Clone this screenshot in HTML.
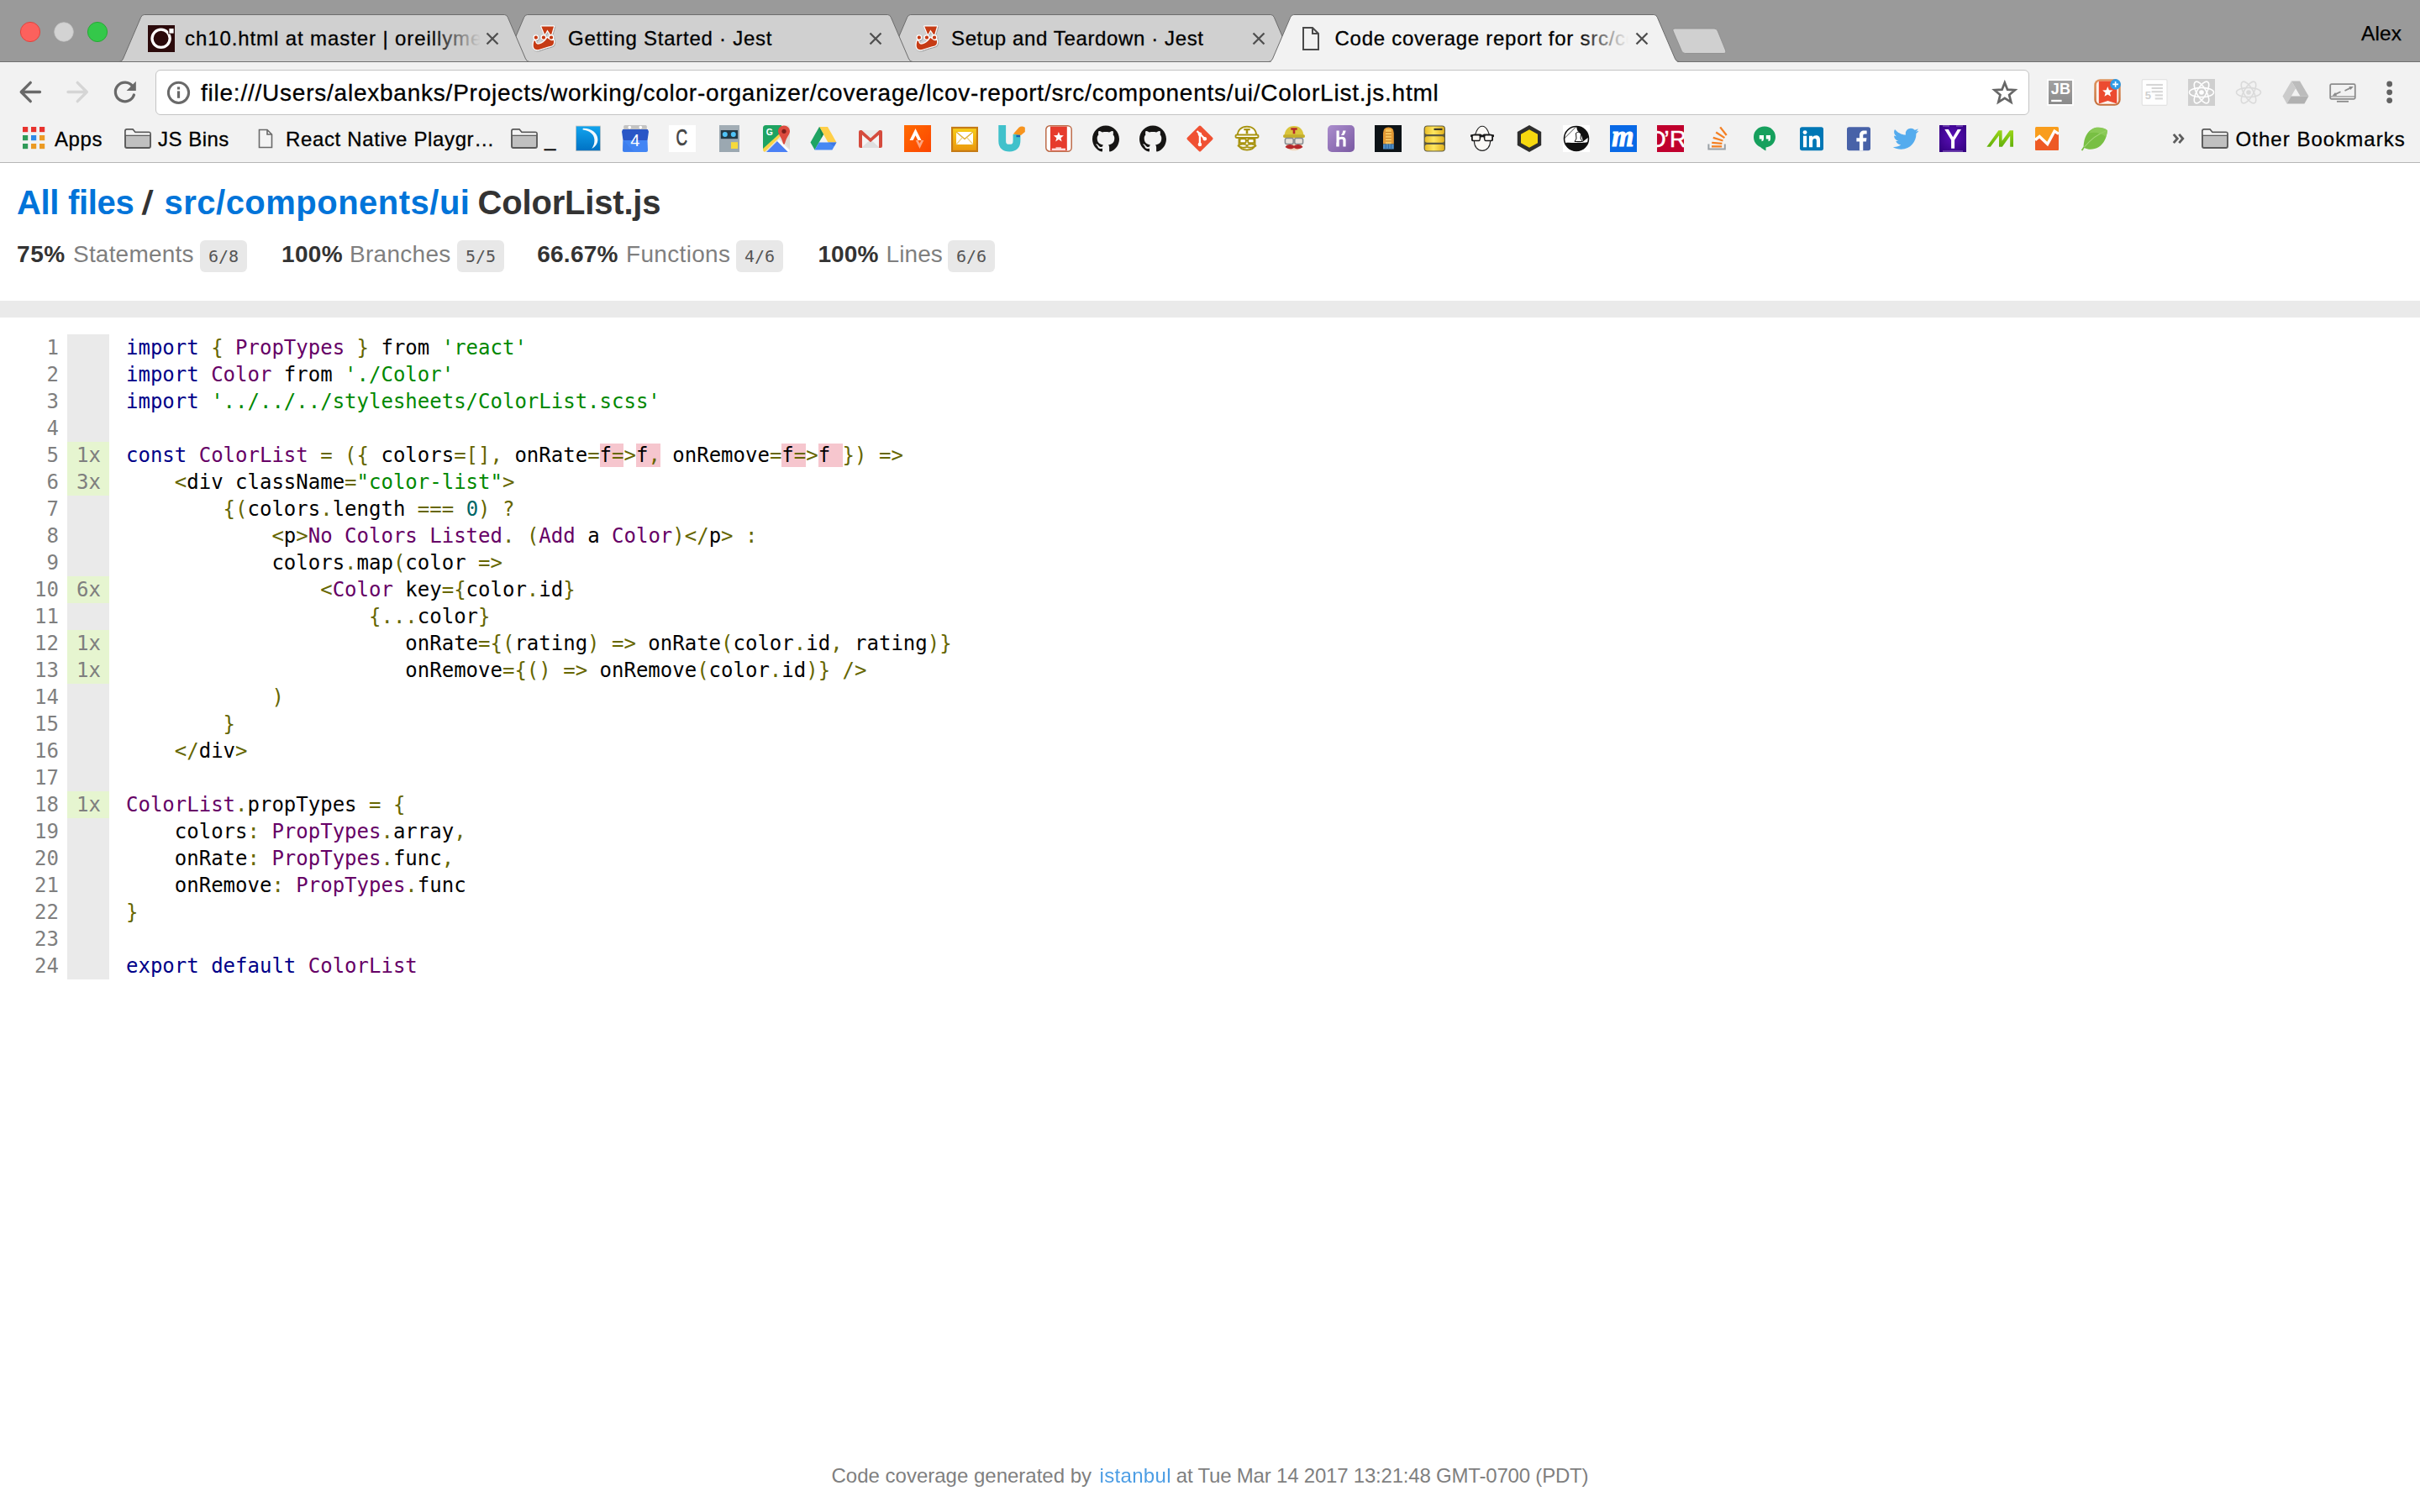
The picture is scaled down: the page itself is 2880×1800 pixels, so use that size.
<!DOCTYPE html>
<html lang="en">
<head>
<meta charset="utf-8">
<title>Code coverage report for src/components/ui/ColorList.js</title>
<style>
*,*:before,*:after{box-sizing:border-box}
html,body{margin:0;padding:0;width:2880px;height:1800px;overflow:hidden;background:#fff}
body{position:relative;font-family:"Liberation Sans",Arial,sans-serif;color:#333}
.abs{position:absolute}
/* ---------- browser chrome ---------- */
#tabstrip{position:absolute;left:0;top:0;width:2880px;height:74px;background:#9a9a9a}
#tabsvg{position:absolute;left:0;top:0}
.tl{position:absolute;top:26px;width:24px;height:24px;border-radius:50%}
.tabtitle{position:absolute;top:30px;-webkit-text-stroke:0.3px #000;height:32px;line-height:32px;font-size:24px;color:#000;white-space:nowrap;overflow:hidden}
.tabtitle .fade{position:absolute;right:0;top:0;width:60px;height:32px}
#user{position:absolute;left:2810px;top:24.5px;-webkit-text-stroke:0.25px #000;font-size:24.5px;line-height:30px;color:#000;letter-spacing:0.1px}
#toolbar{position:absolute;left:0;top:74px;width:2880px;height:119px;background:#f2f2f2}
#tbborder{position:absolute;left:0;top:193px;width:2880px;height:1px;background:#b6b6b6}
#omni{position:absolute;left:185px;top:83px;width:2230px;height:54px;background:#fff;border:1px solid #c4c4c4;border-radius:6px}
#url{position:absolute;left:239px;top:91px;-webkit-text-stroke:0.3px #000;font-size:28px;line-height:40px;color:#000;white-space:nowrap;letter-spacing:0.77px}
.bm{position:absolute;top:149px;-webkit-text-stroke:0.3px #000;height:34px;line-height:34px;font-size:24px;color:#000;white-space:nowrap}
.ico{position:absolute}
/* ---------- page ---------- */
#page{position:absolute;left:0;top:194px;width:2880px;height:1606px;background:#fff;overflow:hidden}
#page a{color:#0074D9;text-decoration:none}
h1{position:absolute;left:0;top:23.5px;margin:0;font-size:40px;line-height:46px;font-weight:bold;color:#333;white-space:nowrap}
h1 .w{position:absolute;top:0}
.stat{position:absolute;left:0;top:91.5px;font-size:28px;line-height:34px;white-space:nowrap;color:#333}
.stat b,.stat span{position:absolute;top:0}
.stat b{font-weight:bold}
.quiet{color:#7f7f7f}
.stat span.fraction{font-family:"DejaVu Sans Mono","Liberation Mono",monospace;font-size:20px;line-height:22px;color:#555;background:#E8E8E8;padding:8px 10px;border-radius:6px;top:0.5px;width:56px;height:38px;letter-spacing:0}
#statusline{position:absolute;left:0;top:164px;width:2880px;height:20px;background:#eaeaea}
#code{position:absolute;left:0;top:204px;font-family:"DejaVu Sans Mono","Liberation Mono",monospace;font-size:24px;line-height:32px;white-space:pre}
#code .ln{position:absolute;left:0;top:0;width:70px;text-align:right;color:#7f7f7f}
#code .cov{position:absolute;left:80px;top:0;width:50px;text-align:right;color:#7f7f7f}
#code .cov span{display:block;height:32px;padding:0 10px;background:#eaeaea}
#code .cov span.y{background:rgb(230,245,208)}
#code .src{position:absolute;left:150px;top:0;color:#000}
.kwd{color:#008}.pun{color:#660}.typ{color:#606}.str{color:#080}.lit{color:#066}.tag{color:#008}.atn{color:#606}.atv{color:#080}
.no{background:#F6C6CE}
#footer{position:absolute;left:0;top:1548.3px;width:2880px;font-size:24px;line-height:30px;color:#7f7f7f;white-space:nowrap}
#footer span,#footer a{position:absolute;top:0}
#footer a{opacity:.7}
</style>
</head>
<body>
<div id="tabstrip"></div>
<div id="toolbar"></div>
<div id="omni"></div>
<svg id="tabsvg" width="2880" height="194" viewBox="0 0 2880 194">
<defs>
<linearGradient id="gblue" x1="0" y1="0" x2="0" y2="1"><stop offset="0" stop-color="#11a4ee"/><stop offset="1" stop-color="#0072c4"/></linearGradient>
<linearGradient id="ggold" x1="0" y1="0" x2="0" y2="1"><stop offset="0" stop-color="#f8cf1a"/><stop offset="1" stop-color="#ea960c"/></linearGradient>
<linearGradient id="gher" x1="0" y1="0" x2="1" y2="1"><stop offset="0" stop-color="#ab8ecd"/><stop offset="1" stop-color="#7a59a2"/></linearGradient>
<linearGradient id="gstrava" x1="0" y1="0" x2="1" y2="1"><stop offset="0" stop-color="#ff6a00"/><stop offset="1" stop-color="#fc4502"/></linearGradient>
<radialGradient id="gyahoo" cx="0.5" cy="0.45" r="0.7"><stop offset="0" stop-color="#5a10b8"/><stop offset="1" stop-color="#33007f"/></radialGradient>
<linearGradient id="gmgreen" x1="0" y1="0" x2="0" y2="1"><stop offset="0" stop-color="#9bd61a"/><stop offset="1" stop-color="#62b00a"/></linearGradient>
<linearGradient id="gdb" x1="0" y1="0" x2="1" y2="0"><stop offset="0" stop-color="#e8be2a"/><stop offset="0.45" stop-color="#ffe760"/><stop offset="1" stop-color="#e2b21e"/></linearGradient>
<linearGradient id="ggdl" x1="0" y1="0" x2="1" y2="1"><stop offset="0" stop-color="#c2c2c2"/><stop offset="1" stop-color="#a6a6a6"/></linearGradient>
<filter id="fsh" x="-20%" y="-20%" width="150%" height="150%"><feDropShadow dx="0.5" dy="0.7" stdDeviation="0.5" flood-color="#000" flood-opacity="0.4"/></filter>
<linearGradient id="gjb" x1="0" y1="0" x2="0" y2="1"><stop offset="0" stop-color="#a3a3a3"/><stop offset="1" stop-color="#898989"/></linearGradient>
<linearGradient id="gwl" x1="0" y1="0" x2="0" y2="1"><stop offset="0" stop-color="#de935c"/><stop offset="1" stop-color="#c46f3c"/></linearGradient>
</defs>
<path d="M1054,73.5 Q1057,73.5 1058.5,70 L1079.7,20.5 Q1081,17.5 1083.7,17.5 H1512.3 Q1515,17.5 1516.3,20.5 L1537.5,70 Q1539,73.5 1542,73.5 Z" fill="#d0d0d0"/>
<path d="M1054,73.5 Q1057,73.5 1058.5,70 L1079.7,20.5 Q1081,17.5 1083.7,17.5 H1512.3 Q1515,17.5 1516.3,20.5 L1537.5,70 Q1539,73.5 1542,73.5" fill="none" stroke="#6c6c6c" stroke-width="1"/>
<path d="M598,73.5 Q601,73.5 602.5,70 L623.7,20.5 Q625,17.5 627.7,17.5 H1056.3 Q1059,17.5 1060.3,20.5 L1081.5,70 Q1083,73.5 1086,73.5 Z" fill="#d0d0d0"/>
<path d="M598,73.5 Q601,73.5 602.5,70 L623.7,20.5 Q625,17.5 627.7,17.5 H1056.3 Q1059,17.5 1060.3,20.5 L1081.5,70 Q1083,73.5 1086,73.5" fill="none" stroke="#6c6c6c" stroke-width="1"/>
<path d="M142,73.5 Q145,73.5 146.5,70 L167.7,20.5 Q169,17.5 171.7,17.5 H600.3 Q603,17.5 604.3,20.5 L625.5,70 Q627,73.5 630,73.5 Z" fill="#d0d0d0"/>
<path d="M142,73.5 Q145,73.5 146.5,70 L167.7,20.5 Q169,17.5 171.7,17.5 H600.3 Q603,17.5 604.3,20.5 L625.5,70 Q627,73.5 630,73.5" fill="none" stroke="#6c6c6c" stroke-width="1"/>
<path d="M1993.5,34 H2040 Q2043,34 2044.2,37 L2053.5,60 Q2054.5,63.5 2051,63.5 H2005.5 Q2002.5,63.5 2001.3,60.5 L1991.2,37 Q1990,34 1993.5,34 Z" fill="#d0d0d0" stroke="#8a8a8a" stroke-width="0.8"/>
<rect x="0" y="73" width="2880" height="1" fill="#6f6f6f"/>
<path d="M1510,73.5 Q1513,73.5 1514.5,70 L1535.7,20.5 Q1537,17.5 1539.7,17.5 H1968.3 Q1971,17.5 1972.3,20.5 L1993.5,70 Q1995,73.5 1998,73.5 Z" fill="#f2f2f2"/>
<rect x="1513" y="73" width="483" height="2" fill="#f2f2f2"/>
<path d="M1510,73.5 Q1513,73.5 1514.5,70 L1535.7,20.5 Q1537,17.5 1539.7,17.5 H1968.3 Q1971,17.5 1972.3,20.5 L1993.5,70 Q1995,73.5 1998,73.5" fill="none" stroke="#6c6c6c" stroke-width="1"/>
<path d="M579.5,39.5 L592.5,52.5 M592.5,39.5 L579.5,52.5" stroke="#4f4f4f" stroke-width="2.3" fill="none"/>
<path d="M1035.5,39.5 L1048.5,52.5 M1048.5,39.5 L1035.5,52.5" stroke="#4f4f4f" stroke-width="2.3" fill="none"/>
<path d="M1491.5,39.5 L1504.5,52.5 M1504.5,39.5 L1491.5,52.5" stroke="#4f4f4f" stroke-width="2.3" fill="none"/>
<path d="M1947.5,39.5 L1960.5,52.5 M1960.5,39.5 L1947.5,52.5" stroke="#4f4f4f" stroke-width="2.3" fill="none"/>
<circle cx="36" cy="38" r="11.6" fill="#fc615d" stroke="#e0443e" stroke-width="1"/>
<circle cx="76" cy="38" r="11.300" fill="#d3d3d3" stroke="#c4c4c4" stroke-width="0.800"/>
<circle cx="116" cy="38" r="11.6" fill="#34c84a" stroke="#27aa35" stroke-width="1"/>
<path d="M1551,33 H1562 L1569,40 V59 H1551 Z M1562,33 V40 H1569" fill="none" stroke="#4a4a4a" stroke-width="2" stroke-linejoin="miter"/>
<path d="M47.500,109.500 H26 M36.300,98.300 L25.200,109.500 L36.300,120.700" fill="none" stroke="#696969" stroke-width="3.300" stroke-linecap="round" stroke-linejoin="round"/>
<path d="M81,109.500 H102.500 M92.200,98.300 L103.300,109.500 L92.200,120.700" fill="none" stroke="#d5d5d5" stroke-width="3.300" stroke-linecap="round" stroke-linejoin="round"/>
<path d="M157.800,102.800 A11.300,11.300 0 1 0 159.400,113" fill="none" stroke="#696969" stroke-width="3.300" stroke-linecap="round"/>
<path d="M161.800,96.800 V108 H150.600 Z" fill="#696969"/>
<circle cx="212.500" cy="110.300" r="12.100" fill="none" stroke="#696969" stroke-width="3"/>
<rect x="210.900" y="108.400" width="3.200" height="8.400" fill="#696969"/><rect x="210.900" y="103.400" width="3.200" height="3.100" fill="#696969"/>
<path d="M2385.80,98.40 L2389.09,106.67 L2397.97,107.24 L2391.13,112.93 L2393.32,121.56 L2385.80,116.80 L2378.28,121.56 L2380.47,112.93 L2373.63,107.24 L2382.51,106.67 Z" fill="none" stroke="#666" stroke-width="2.700" stroke-linejoin="miter"/>
<circle cx="2843.700" cy="100" r="3.400" fill="#626262"/>
<circle cx="2843.700" cy="109.8" r="3.400" fill="#626262"/>
<circle cx="2843.700" cy="119.6" r="3.400" fill="#626262"/>
<rect x="27" y="151" width="6.2" height="6.2" fill="#e8332e"/>
<rect x="37" y="151" width="6.2" height="6.2" fill="#e8332e"/>
<rect x="47" y="151" width="6.2" height="6.2" fill="#e8332e"/>
<rect x="27" y="161" width="6.2" height="6.2" fill="#2f9a58"/>
<rect x="37" y="161" width="6.2" height="6.2" fill="#2f8ae8"/>
<rect x="47" y="161" width="6.2" height="6.2" fill="#eb9a23"/>
<rect x="27" y="171" width="6.2" height="6.2" fill="#2f9a58"/>
<rect x="37" y="171" width="6.2" height="6.2" fill="#eb9a23"/>
<rect x="47" y="171" width="6.2" height="6.2" fill="#eb9a23"/>
<path d="M149,156 Q149,154 151,154 H158 L161,157.5 H177 Q179,157.5 179,159.5 V174 Q179,176 177,176 H151 Q149,176 149,174 Z" fill="#c0c0c0" stroke="#5a5a5a" stroke-width="1.900"/><path d="M149,161.3 H179" stroke="#5e5e5e" stroke-width="1.4"/><path d="M149.8,156.2 Q149.8,154.8 151.2,154.8 H157.6 L160.6,158.3 H178.2 V160.6 H149.8 Z" fill="#f4f4f4"/>
<path d="M609,156 Q609,154 611,154 H618 L621,157.5 H637 Q639,157.5 639,159.5 V174 Q639,176 637,176 H611 Q609,176 609,174 Z" fill="#c0c0c0" stroke="#5a5a5a" stroke-width="1.900"/><path d="M609,161.3 H639" stroke="#5e5e5e" stroke-width="1.4"/><path d="M609.8,156.2 Q609.8,154.8 611.2,154.8 H617.6 L620.6,158.3 H638.2 V160.6 H609.8 Z" fill="#f4f4f4"/>
<path d="M2621,156 Q2621,154 2623,154 H2630 L2633,157.5 H2649 Q2651,157.5 2651,159.5 V174 Q2651,176 2649,176 H2623 Q2621,176 2621,174 Z" fill="#c0c0c0" stroke="#5a5a5a" stroke-width="1.900"/><path d="M2621,161.3 H2651" stroke="#5e5e5e" stroke-width="1.4"/><path d="M2621.8,156.2 Q2621.8,154.8 2623.2,154.8 H2629.6 L2632.6,158.3 H2650.2 V160.6 H2621.8 Z" fill="#f4f4f4"/>
<path d="M308.5,154.5 H318 L323.5,160 V175.5 H308.5 Z M318,154.5 V160 H323.5" fill="#f4f4f4" stroke="#6a6a6a" stroke-width="1.6"/>
<path d="M2586.800,159.800 L2591.300,165 L2586.800,170.200 M2593.300,159.800 L2597.800,165 L2593.300,170.200" fill="none" stroke="#5e5e5e" stroke-width="2.800"/>
</svg>
<svg class="ico" style="left:176px;top:30px" width="32" height="32" viewBox="0 0 32 32"><rect width="32" height="32" fill="#2b0a0b"/><circle cx="15.6" cy="15.8" r="10.6" fill="none" stroke="#fff" stroke-width="3.3"/><rect x="24.3" y="2.9" width="7.4" height="7.6" fill="#2b0a0b"/><rect x="25.4" y="4" width="5.2" height="5.6" fill="#fff"/></svg>
<svg class="ico" style="left:632px;top:30px" width="32" height="32" viewBox="0 0 32 32"><g filter="url(#fsh)"><g stroke="#fff" stroke-width="2.4" stroke-linejoin="round" fill="#fff"><path d="M12.3,1.4 H27 L24.2,11 L22.9,10.7 L19.4,5.6 L16.7,10.4 L15.9,10.2 Z"/><path d="M3.6,18.4 C2.4,22 2.4,25.5 3.5,27.3 C5,29.7 8.5,29.5 11,28.5 C15,26.9 19.5,25.6 23.5,24.7 C26.5,24 27.7,21.5 26.7,17.7 C25.4,18.7 23.4,18.4 22.2,17.3 L19.2,15 C17.5,18.6 12,23 8,22.8 C6.4,22.6 5.3,21 5,18.8 C4.5,18.9 4,18.8 3.6,18.4 Z"/><circle cx="5.85" cy="14.65" r="2.2"/><circle cx="14.95" cy="14.65" r="2.2"/><circle cx="24" cy="14.65" r="2.2"/></g></g><path d="M12.3,1.4 H27 L24.2,11 L22.9,10.7 L19.4,5.6 L16.7,10.4 L15.9,10.2 Z" fill="#c63b14"/><path d="M3.6,18.4 C2.4,22 2.4,25.5 3.5,27.3 C5,29.7 8.5,29.5 11,28.5 C15,26.9 19.5,25.6 23.5,24.7 C26.5,24 27.7,21.5 26.7,17.7 C25.4,18.7 23.4,18.4 22.2,17.3 L19.2,15 C17.5,18.6 12,23 8,22.8 C6.4,22.6 5.3,21 5,18.8 C4.5,18.9 4,18.8 3.6,18.4 Z" fill="#c63b14"/><circle cx="5.85" cy="14.65" r="2.15" fill="#c63b14"/><circle cx="14.95" cy="14.65" r="2.15" fill="#c63b14"/><circle cx="24" cy="14.65" r="2.15" fill="#c63b14"/></svg>
<svg class="ico" style="left:1088px;top:30px" width="32" height="32" viewBox="0 0 32 32"><g filter="url(#fsh)"><g stroke="#fff" stroke-width="2.4" stroke-linejoin="round" fill="#fff"><path d="M12.3,1.4 H27 L24.2,11 L22.9,10.7 L19.4,5.6 L16.7,10.4 L15.9,10.2 Z"/><path d="M3.6,18.4 C2.4,22 2.4,25.5 3.5,27.3 C5,29.7 8.5,29.5 11,28.5 C15,26.9 19.5,25.6 23.5,24.7 C26.5,24 27.7,21.5 26.7,17.7 C25.4,18.7 23.4,18.4 22.2,17.3 L19.2,15 C17.5,18.6 12,23 8,22.8 C6.4,22.6 5.3,21 5,18.8 C4.5,18.9 4,18.8 3.6,18.4 Z"/><circle cx="5.85" cy="14.65" r="2.2"/><circle cx="14.95" cy="14.65" r="2.2"/><circle cx="24" cy="14.65" r="2.2"/></g></g><path d="M12.3,1.4 H27 L24.2,11 L22.9,10.7 L19.4,5.6 L16.7,10.4 L15.9,10.2 Z" fill="#c63b14"/><path d="M3.6,18.4 C2.4,22 2.4,25.5 3.5,27.3 C5,29.7 8.5,29.5 11,28.5 C15,26.9 19.5,25.6 23.5,24.7 C26.5,24 27.7,21.5 26.7,17.7 C25.4,18.7 23.4,18.4 22.2,17.3 L19.2,15 C17.5,18.6 12,23 8,22.8 C6.4,22.6 5.3,21 5,18.8 C4.5,18.9 4,18.8 3.6,18.4 Z" fill="#c63b14"/><circle cx="5.85" cy="14.65" r="2.15" fill="#c63b14"/><circle cx="14.95" cy="14.65" r="2.15" fill="#c63b14"/><circle cx="24" cy="14.65" r="2.15" fill="#c63b14"/></svg>
<div class="tabtitle" style="left:220px;width:352px;letter-spacing:0.9px">ch10.html at master | oreillymedia/learning-react<span class="fade" style="background:linear-gradient(to right, rgba(208,208,208,0), #d0d0d0)"></span></div>
<div class="tabtitle" style="left:676px;width:352px;letter-spacing:0.75px">Getting Started · Jest</div>
<div class="tabtitle" style="left:1132px;width:352px;letter-spacing:0.62px">Setup and Teardown · Jest</div>
<div class="tabtitle" style="left:1588.500px;width:349px;letter-spacing:0.740px">Code coverage report for src/components/ui/ColorList.js<span class="fade" style="background:linear-gradient(to right, rgba(242,242,242,0), #f2f2f2)"></span></div>
<div id="user">Alex</div>
<div id="url">file:///Users/alexbanks/Projects/working/color-organizer/coverage/lcov-report/src/components/ui/ColorList.js.html</div>
<svg class="ico" style="left:2436px;top:94px" width="32" height="32" viewBox="0 0 32 32"><rect x="1" y="1" width="30" height="30" fill="url(#gjb)" stroke="#fdfdfd" stroke-width="2"/><text x="4.800" y="17.700" font-family="Liberation Sans, Arial, sans-serif" font-size="18" font-weight="bold" fill="#fff" letter-spacing="0.300">JB</text><rect x="5.200" y="24.800" width="12.400" height="2.300" fill="#fff"/></svg>
<svg class="ico" style="left:2492px;top:94px" width="32" height="32" viewBox="0 0 32 32"><rect x="0.300" y="0.300" width="31.400" height="31.400" rx="7" fill="url(#gwl)"/><rect x="2.800" y="2.400" width="26.400" height="27.400" rx="4.500" fill="#fdf3ee"/><path d="M5.800,2.400 H27.300 V29.500 L16.500,25.900 L5.800,29.500 Z" fill="#ec4b30"/><path d="M16.30,9.10 L17.95,13.33 L22.48,13.59 L18.96,16.47 L20.12,20.86 L16.30,18.40 L12.48,20.86 L13.64,16.47 L10.12,13.59 L14.65,13.33 Z" fill="#fff"/><circle cx="25.600" cy="6.400" r="6.300" fill="#2f9be6"/><path d="M22.200,6.400 H29 M25.600,3 V9.800" stroke="#fff" stroke-width="1.600"/></svg>
<svg class="ico" style="left:2548px;top:94px" width="32" height="32" viewBox="0 0 32 32"><rect x="1.200" y="0.600" width="29.800" height="30.800" rx="1.500" fill="#fefefe" stroke="#e2e2e2" stroke-width="1.200"/><g stroke="#d6d6d6" stroke-width="2.100"><path d="M6.200,7 H25.900"/><path d="M12.600,11 H25.900"/><path d="M12.600,15.200 H25.900"/><path d="M16.700,19.400 H25.900"/><path d="M16.700,23.400 H25.900"/></g><text x="4.800" y="23.800" font-family="Liberation Sans, Arial, sans-serif" font-size="13" font-weight="bold" fill="#d0d0d0">5</text></svg>
<svg class="ico" style="left:2604px;top:94px" width="32" height="32" viewBox="0 0 32 32"><rect width="32" height="32" fill="#cfcfcf"/><g fill="none" stroke="#fff" stroke-width="1.6"><ellipse cx="16" cy="16" rx="14.5" ry="5.6"/><ellipse cx="16" cy="16" rx="14.5" ry="5.6" transform="rotate(60 16 16)"/><ellipse cx="16" cy="16" rx="14.5" ry="5.6" transform="rotate(120 16 16)"/></g><circle cx="16" cy="16" r="2.8" fill="#fff"/></svg>
<svg class="ico" style="left:2660px;top:94px" width="32" height="32" viewBox="0 0 32 32"><g fill="none" stroke="#dadada" stroke-width="1.6"><ellipse cx="16" cy="16" rx="14.5" ry="5.6"/><ellipse cx="16" cy="16" rx="14.5" ry="5.6" transform="rotate(60 16 16)"/><ellipse cx="16" cy="16" rx="14.5" ry="5.6" transform="rotate(120 16 16)"/></g><circle cx="16" cy="16" r="2.8" fill="#dadada"/></svg>
<svg class="ico" style="left:2716px;top:94px" width="32" height="32" viewBox="0 0 32 32"><path d="M11,2.5 H21 L31.5,20.5 H21.5 Z" fill="#bcbcbc"/><path d="M11,2.5 L0.5,20.5 L5.6,29.5 L16.1,11.3 Z" fill="#cbcbcb"/><path d="M10.7,20.5 H31.5 L26.4,29.5 H5.6 Z" fill="#b1b1b1"/></svg>
<svg class="ico" style="left:2772px;top:94px" width="32" height="32" viewBox="0 0 32 32"><rect x="1.2" y="6.2" width="29.6" height="17.6" rx="1.5" fill="none" stroke="#8c8c8c" stroke-width="1.8"/><path d="M1.5,21 H30.5" stroke="#8c8c8c" stroke-width="1.2"/><path d="M9,26.8 H23" stroke="#8c8c8c" stroke-width="1.8"/><path d="M18.5,14 L26,10.4" stroke="#8c8c8c" stroke-width="1.8"/><path d="M28.8,9 L23.4,9 L25.3,13 Z" fill="#8c8c8c"/><path d="M13.5,15.2 L6.5,18.6" stroke="#8c8c8c" stroke-width="1.8"/><path d="M3.6,20 L9,20 L7.1,16 Z" fill="#8c8c8c"/></svg>
<div class="bm" style="left:65px;letter-spacing:0.6px">Apps</div>
<div class="bm" style="left:188px;letter-spacing:0.49px">JS Bins</div>
<div class="bm" style="left:340px;letter-spacing:0.64px">React Native Playgr…</div>
<div class="bm" style="left:648px">_</div>
<div class="bm" style="left:2660.5px;letter-spacing:1.04px">Other Bookmarks</div>
<svg class="ico" style="left:684px;top:149px" width="32" height="32" viewBox="0 0 32 32"><rect x="1" y="0.6" width="30" height="30.4" fill="#cfc9c4"/><rect x="1.8" y="1.4" width="28.4" height="28.8" fill="url(#gblue)"/><path d="M9.6,3.9 C19,3.3 27.4,9 27.4,17 C27.4,22 24.6,25.6 20.3,27.9 C22.6,24.6 23.7,21 23.4,17 C22.9,10.6 17.3,6.300 9.600,5.500 Z" fill="#fff" opacity="0.95"/></svg>
<svg class="ico" style="left:740px;top:149px" width="32" height="32" viewBox="0 0 32 32"><rect x="2.2" y="0" width="27.6" height="7" rx="1.5" fill="#c3c3c3"/><circle cx="9.3" cy="2.6" r="1.8" fill="#fff"/><circle cx="22.3" cy="2.6" r="1.8" fill="#fff"/><path d="M1.2,5 H30.8 L32,7.5 L30.5,18 H1.5 L0,7.500 Z" fill="#2a56c6"/><path d="M1.500,18 H30.500 L31,30 Q31,32 29,32 H3 Q1,32 1,30 Z" fill="#4285f4"/><path d="M1.500,18 L14,31 H3 Q1,31.500 1,30 Z" fill="#3b78e7" opacity="0.55"/><text x="15.800" y="25" font-family="Liberation Sans, Arial, sans-serif" font-size="20" fill="#fff" text-anchor="middle">4</text></svg>
<svg class="ico" style="left:796px;top:149px" width="32" height="32" viewBox="0 0 32 32"><rect width="32" height="32" fill="#fff"/><text transform="translate(15.400 23.500) scale(0.700 1)" font-family="Liberation Sans, Arial, sans-serif" font-size="27" fill="#444" text-anchor="middle" stroke="#444" stroke-width="0.700">C</text></svg>
<svg class="ico" style="left:852px;top:149px" width="32" height="32" viewBox="0 0 32 32"><rect x="4" y="0" width="24" height="32" fill="#9ba8b1"/><rect x="4" y="0" width="24" height="5.600" fill="#a2adb5"/><rect x="5.800" y="6" width="20.200" height="10.200" fill="#243a46"/><circle cx="10.800" cy="11" r="3" fill="#4fc3f7"/><circle cx="20.800" cy="11" r="3" fill="#4fc3f7"/><rect x="18" y="20.200" width="8" height="7.800" fill="#f6da3c"/></svg>
<svg class="ico" style="left:908px;top:149px" width="32" height="32" viewBox="0 0 32 32"><clipPath id="cpm"><rect width="32" height="32" rx="3.5"/></clipPath><g clip-path="url(#cpm)"><rect width="32" height="32" fill="#e6e3df"/><path d="M0,0 H22 L22,10 L0,29 Z" fill="#1ea362"/><path d="M0,28 L21,9 L23,11 L2,32 H0 Z" fill="#fbd445"/><path d="M4,32 L17,19 L30,32 Z" fill="#4a80f5"/><path d="M19,17 L32,30 V32 H30 L17,19 Z" fill="#fff" opacity="0.9"/><path d="M21,14 L32,3 V28 Z" fill="#dedbd6"/></g><path d="M25,0.5 C29,0.5 32,3.5 32,7.3 C32,11 28,14 26,22 C25.8,23 24.2,23 24,22 C22,14 18,11 18,7.3 C18,3.5 21,0.5 25,0.5 Z" fill="#dc4b3e"/><circle cx="25" cy="7.3" r="2.6" fill="#7b1f1a"/><text x="3.8" y="11.7" font-family="Liberation Sans, Arial, sans-serif" font-size="10.4" font-weight="bold" fill="#fff">G</text></svg>
<svg class="ico" style="left:964px;top:149px" width="32" height="32" viewBox="0 0 32 32"><path d="M11,2 H21 L31.5,20.5 H21.5 Z" fill="#ffcf48"/><path d="M11,2 L0.5,20.5 L5.6,29.5 L16.1,11 Z" fill="#1fa463"/><path d="M10.7,20.5 H31.5 L26.4,29.5 H5.6 Z" fill="#4688f4"/><path d="M11,2 L16.1,11 L13.4,15.8 Z" fill="#14804a" opacity="0.8"/><path d="M21.5,20.5 H31.5 L29,25 Z" fill="#3367d6" opacity="0.5"/></svg>
<svg class="ico" style="left:1020px;top:149px" width="32" height="32" viewBox="0 0 32 32"><rect x="2" y="6" width="28" height="21" rx="2" fill="#e9e9e9"/><path d="M4,8 L16,19 L28,8 V27 H4 Z" fill="#f4f4f4"/><path d="M5,27 L16,17 L27,27 Z" fill="#dedede"/><path d="M2,8 Q2,6 4,6 H5.5 L16,15.5 L26.5,6 H28 Q30,6 30,8 V25 Q30,27 28,27 H26 V11.5 L16,20.3 L6,11.5 V27 H4 Q2,27 2,25 Z" fill="#d54b3d"/></svg>
<svg class="ico" style="left:1076px;top:149px" width="32" height="32" viewBox="0 0 32 32"><rect width="32" height="32" fill="url(#gstrava)"/><path d="M13.5,4 L20.5,18 H16.4 L13.5,12.3 L10.6,18 H6.5 Z" fill="#fff"/><path d="M18.5,28 L23.3,18 H20.4 L18.5,21.8 L16.6,18 H13.7 Z" fill="#fda580"/></svg>
<svg class="ico" style="left:1132px;top:149px" width="32" height="32" viewBox="0 0 32 32"><rect x="1" y="3" width="30" height="28" fill="url(#ggold)" stroke="#c57b14" stroke-width="2.2"/><rect x="6" y="8" width="20" height="15" fill="#fff"/><path d="M6,8 L16,16.5 L26,8" fill="none" stroke="#e0b13a" stroke-width="1.6"/><path d="M6,23 L13,15 M26,23 L19,15" fill="none" stroke="#edd48a" stroke-width="1.2"/></svg>
<svg class="ico" style="left:1188px;top:149px" width="32" height="32" viewBox="0 0 32 32"><path d="M4.7,0 V19 Q4.7,27.200 13.400,27.200 Q22,27.200 22,18.500 V11" fill="none" stroke="#40c1cb" stroke-width="8.800" stroke-linecap="butt"/><path d="M17.800,10.600 L24.600,2.800 Q28,0.400 31.800,2.800 L31.800,8 L27,12 Z" fill="#f7941e"/><rect x="21.400" y="11.800" width="4.600" height="2.400" fill="#1b62b3"/></svg>
<svg class="ico" style="left:1244px;top:149px" width="32" height="32" viewBox="0 0 32 32"><rect x="0.800" y="0.800" width="30.400" height="30.400" rx="4.500" fill="#fff" stroke="#bd6c4a" stroke-width="1.500"/><rect x="6" y="1.600" width="19.800" height="28.800" fill="#e63b2c"/><path d="M15.90,8.00 L17.49,12.12 L21.89,12.35 L18.47,15.13 L19.60,19.40 L15.90,17.00 L12.20,19.40 L13.33,15.13 L9.91,12.35 L14.31,12.12 Z" fill="#fff"/><path d="M7.700,28.700 H24" fill="none" stroke="#fff" stroke-width="1.900"/><path d="M12.500,27 H19" fill="none" stroke="#fff" stroke-width="1.400" opacity="0.85"/></svg>
<svg class="ico" style="left:1300px;top:149px" width="32" height="32" viewBox="0 0 32 32"><path d="M16,0.4 C7.2,0.4 0,7.6 0,16.4 C0,23.5 4.6,29.5 10.9,31.6 C11.7,31.7 12,31.2 12,30.8 C12,30.4 12,29.2 12,27.8 C7.5,28.8 6.6,25.9 6.6,25.9 C5.9,24 4.8,23.5 4.8,23.5 C3.4,22.5 4.9,22.5 4.9,22.5 C6.5,22.6 7.4,24.2 7.4,24.2 C8.8,26.6 11.1,25.9 12,25.5 C12.1,24.5 12.6,23.8 13,23.4 C9.5,23 5.7,21.6 5.7,15.5 C5.7,13.7 6.3,12.3 7.4,11.2 C7.2,10.8 6.7,9.2 7.5,7 C7.5,7 8.9,6.5 11.900,8.600 C13.200,8.200 14.600,8.100 16,8.100 C17.400,8.100 18.800,8.200 20.100,8.600 C23.100,6.500 24.500,7 24.500,7 C25.300,9.200 24.800,10.800 24.600,11.200 C25.700,12.300 26.300,13.700 26.300,15.500 C26.300,21.600 22.500,23 19,23.400 C19.600,23.900 20.100,24.900 20.100,26.400 C20.100,28.600 20.100,30.300 20.100,30.800 C20.100,31.200 20.400,31.700 21.200,31.600 C27.500,29.500 32,23.500 32,16.400 C32,7.600 24.800,0.400 16,0.400 Z" fill="#161514"/></svg>
<svg class="ico" style="left:1356px;top:149px" width="32" height="32" viewBox="0 0 32 32"><path d="M16,0.4 C7.2,0.4 0,7.6 0,16.4 C0,23.5 4.6,29.5 10.9,31.6 C11.7,31.7 12,31.2 12,30.8 C12,30.4 12,29.2 12,27.8 C7.5,28.8 6.6,25.9 6.6,25.9 C5.9,24 4.8,23.5 4.8,23.5 C3.4,22.5 4.9,22.5 4.9,22.5 C6.5,22.6 7.4,24.2 7.4,24.2 C8.8,26.6 11.1,25.9 12,25.5 C12.1,24.5 12.6,23.8 13,23.4 C9.5,23 5.7,21.6 5.7,15.5 C5.7,13.7 6.3,12.3 7.4,11.2 C7.2,10.8 6.7,9.2 7.5,7 C7.5,7 8.9,6.5 11.900,8.600 C13.200,8.200 14.600,8.100 16,8.100 C17.400,8.100 18.800,8.200 20.100,8.600 C23.100,6.500 24.500,7 24.500,7 C25.300,9.200 24.800,10.800 24.600,11.200 C25.700,12.300 26.300,13.700 26.300,15.500 C26.300,21.600 22.500,23 19,23.400 C19.600,23.900 20.100,24.900 20.100,26.400 C20.100,28.600 20.100,30.300 20.100,30.800 C20.100,31.200 20.400,31.700 21.200,31.600 C27.500,29.500 32,23.500 32,16.400 C32,7.600 24.800,0.400 16,0.400 Z" fill="#161514"/></svg>
<svg class="ico" style="left:1412px;top:149px" width="32" height="32" viewBox="0 0 32 32"><rect x="4.600" y="4.600" width="22.800" height="22.800" rx="1.600" transform="rotate(45 16 16)" fill="#f05133"/><path d="M12.500,7 L21.800,16.200 M15.900,10.500 V23" stroke="#fff" stroke-width="2.300" fill="none"/><circle cx="15.900" cy="10.800" r="2.300" fill="#fff"/><circle cx="15.900" cy="23" r="2.300" fill="#fff"/><circle cx="21.800" cy="16.200" r="2.300" fill="#fff"/></svg>
<svg class="ico" style="left:1468px;top:149px" width="32" height="32" viewBox="0 0 32 32"><g fill="#fff" stroke="#a89310" stroke-width="1.900" stroke-linejoin="round"><path d="M6.500,15 V23.500 C7.500,27.500 11,29.500 16,29.500 C21,29.500 24.500,27.500 25.500,23.500 V15 Z"/><path d="M4.800,12.500 C4.800,5.500 9.500,1.800 16,1.800 C22.500,1.800 27.200,5.500 27.200,12.500 Z"/><path d="M4,11.500 H28 Q29.500,11.500 29.500,13.200 Q29.500,15 28,15 H4 Q2.500,15 2.500,13.200 Q2.500,11.500 4,11.500 Z"/><rect x="7.500" y="16.300" width="7.300" height="5" rx="1.400"/><rect x="17.200" y="16.300" width="7.300" height="5" rx="1.400"/><path d="M14.800,18 H17.200" fill="none"/><path d="M5.500,24.500 C8.500,21.800 13.500,22.200 16,24.200 C18.500,22.200 23.500,21.800 26.500,24.500 C23.500,27.300 18.500,27 16,25.800 C13.500,27 8.500,27.300 5.500,24.500 Z"/></g><path d="M12.300,4 H19.700 V6.300 H17.300 V10.300 H14.700 V6.300 H12.300 Z" fill="#a89310"/></svg>
<svg class="ico" style="left:1524px;top:149px" width="32" height="32" viewBox="0 0 32 32"><path d="M6.500,14 V24 C7.800,28.800 11,30.300 16,30.300 C21,30.300 24.200,28.800 25.500,24 V14 Z" fill="#f0d6bc"/><path d="M4.600,13 C4.600,5.500 9.300,1 16,1 C22.700,1 27.400,5.500 27.400,13 Z" fill="#dac53c"/><path d="M4.500,11.300 H27.500 Q29,11.300 29,13.100 Q29,15 27.500,15 H4.500 Q3,15 3,13.100 Q3,11.300 4.500,11.300 Z" fill="#c4ae2b"/><path d="M12.300,3.300 H19.700 V5.800 H17.300 V10.200 H14.700 V5.800 H12.300 Z" fill="#b5282a"/><rect x="5.400" y="15.600" width="9.800" height="7" rx="2" fill="#e6e0da" stroke="#858c91" stroke-width="1.500"/><rect x="16.800" y="15.600" width="9.800" height="7" rx="2" fill="#e6e0da" stroke="#858c91" stroke-width="1.500"/><path d="M15.200,18 H16.800" stroke="#858c91" stroke-width="1.500"/><path d="M5.500,26 C8,22 13.500,22.300 16,24.800 C18.500,22.300 24,22 26.500,26 C23,29 18.500,28.600 16,27 C13.500,28.600 9,29 5.500,26 Z" fill="#b5282a"/></svg>
<svg class="ico" style="left:1580px;top:149px" width="32" height="32" viewBox="0 0 32 32"><rect width="32" height="32" rx="5" fill="url(#gher)"/><path d="M10.500,6.500 H13.700 V14.300 C15.500,13.600 18,13.300 19.600,14.200 C21.200,15.100 21.600,16.600 21.600,18 V25.500 H18.400 V18.300 C18.400,17.300 17.800,16.700 16.700,16.700 C15.600,16.700 14.400,17.200 13.700,17.600 V25.500 H10.500 Z" fill="#fff"/><path d="M18.300,6.500 H21.600 C21.300,8.800 20.500,10.500 19.200,12 H15.900 C17.300,10.300 18,8.600 18.300,6.500 Z" fill="#fff"/><path d="M10.500,20.500 L13.400,23 L10.500,25.500 Z" fill="#fff"/><rect x="10.500" y="17.500" width="3.200" height="8" fill="url(#gher)" opacity="0"/></svg>
<svg class="ico" style="left:1636px;top:149px" width="32" height="32" viewBox="0 0 32 32"><rect width="32" height="32" fill="#0d1317"/><path d="M10,9.5 Q10,2.4 16.4,2.4 Q22.800,2.400 22.800,9.500 V22.500 H10 Z" fill="#e39a35"/><rect x="13" y="5" width="6.800" height="17.500" fill="#f7c45c"/><path d="M13,8.500 H19.800 M13,12 H19.800 M13,15.500 H19.800 M13,19 H19.800" stroke="#c47d22" stroke-width="1"/><rect x="10" y="22.500" width="12.800" height="6" fill="#4e8cc4"/><path d="M13.200,22.500 V28.500 M16.400,22.500 V28.500 M19.600,22.500 V28.500" stroke="#2f6aa3" stroke-width="1"/></svg>
<svg class="ico" style="left:1692px;top:149px" width="32" height="32" viewBox="0 0 32 32"><rect x="2.600" y="0.400" width="25.400" height="31.200" rx="4" fill="#5d5a40"/><rect x="3.800" y="1.600" width="23" height="9.400" rx="2.500" fill="url(#gdb)"/><rect x="3.800" y="13.200" width="23" height="7.600" rx="2.500" fill="url(#gdb)"/><rect x="3.800" y="23" width="23" height="7.500" rx="2.500" fill="url(#gdb)"/><rect x="14.500" y="3.800" width="10" height="2.200" fill="#3c3a2a"/></svg>
<svg class="ico" style="left:1748px;top:149px" width="32" height="32" viewBox="0 0 32 32"><path d="M16,1.300 C21.200,1.300 25.600,10.500 25.600,18.800 C25.600,25.800 21.500,30.400 16,30.400 C10.500,30.400 6.400,25.800 6.400,18.800 C6.400,10.500 10.800,1.300 16,1.300 Z" fill="#fbf9f6" stroke="#222" stroke-width="1.100"/><path d="M2,11.500 L7,10.600 H14 L16,11.800 L18,10.600 H25 L30,11.500 V13.800 L29,14.300 V17.600 Q29,19.300 27.400,19.300 H20.200 Q18.600,19.300 18.300,17.800 L17.500,14.300 H14.500 L13.700,17.800 Q13.400,19.300 11.800,19.300 H4.600 Q3,19.300 3,17.600 V14.300 L2,13.800 Z" fill="#1a1a1a"/><rect x="4.800" y="12.400" width="7.800" height="5.400" rx="1" fill="#fbf9f6"/><rect x="19.400" y="12.400" width="7.800" height="5.400" rx="1" fill="#fbf9f6"/></svg>
<svg class="ico" style="left:1804px;top:149px" width="32" height="32" viewBox="0 0 32 32"><path d="M16,0 L30.2,8 V24 L16,32 L1.8,24 V8 Z" fill="#2e2e2e"/><path d="M16,5.2 L26,10.800 V21.200 L16,26.800 L6,21.200 V10.800 Z" fill="#f7d90f"/></svg>
<svg class="ico" style="left:1860px;top:149px" width="32" height="32" viewBox="0 0 32 32"><rect width="32" height="32" fill="#fff"/><circle cx="16" cy="16" r="14.500" fill="#fff" stroke="#111" stroke-width="1.600"/><path d="M3,21 C8,20 12,21.500 16,21 C20,20.500 25,21.500 29.500,20 C28,27 22.500,30.500 16,30.500 C9.500,30.500 4.500,27 3,21 Z" fill="#111"/><path d="M16,1.500 C23,1.500 29.500,6.500 30.300,14.500 L24,19.500 L22,12 L17,6 Z" fill="#111"/><path d="M15.500,9.500 Q19,6.500 21.500,10.500 L21,16 L23.500,19.500 H14 L16,16 Z" fill="#fff" stroke="#111" stroke-width="1"/><path d="M1.500,16 L16,1.500" stroke="#111" stroke-width="0.800"/></svg>
<svg class="ico" style="left:1916px;top:149px" width="32" height="32" viewBox="0 0 32 32"><rect width="32" height="32" fill="#0869e6"/><text transform="translate(15.400 24.600) scale(0.960 1)" font-family="Liberation Serif, serif" font-style="italic" font-weight="bold" font-size="35" fill="#fff" stroke="#fff" stroke-width="1.100" text-anchor="middle">m</text></svg>
<svg class="ico" style="left:1972px;top:149px" width="32" height="32" viewBox="0 0 32 32"><rect width="32" height="32" fill="#c0002d"/><clipPath id="cpo"><rect width="32" height="32"/></clipPath><g clip-path="url(#cpo)" font-family="Liberation Sans, Arial, sans-serif" font-size="27.500" fill="#fff" stroke="#fff" stroke-width="0.550"><text x="-10.700" y="25.700">O</text><text x="8.600" y="25.700">’</text><text x="14.900" y="25.700">R</text></g></svg>
<svg class="ico" style="left:2028px;top:149px" width="32" height="32" viewBox="0 0 32 32"><g transform="translate(2.200 0.600)"><path d="M3.200,21.800 V28 H22.600 V21.800" fill="none" stroke="#9aa0a6" stroke-width="2"/><rect x="6.800" y="23.600" width="12.200" height="2.300" fill="#f48024"/><rect x="7" y="19.600" width="12.200" height="2.300" fill="#f48024" transform="rotate(5 13 20.700)"/><rect x="8.300" y="15" width="12.200" height="2.300" fill="#f48024" transform="rotate(17 14.500 16.200)"/><rect x="11" y="10" width="12.200" height="2.300" fill="#f48024" transform="rotate(33 17 11.200)"/><rect x="14.600" y="5.400" width="12.200" height="2.300" fill="#f48024" transform="rotate(52 20.700 6.600)"/></g></svg>
<svg class="ico" style="left:2084px;top:149px" width="32" height="32" viewBox="0 0 32 32"><path d="M16,1.500 C23.500,1.500 29,7 29,14 C29,21 23.500,26 17.500,26.500 V30.500 C15,29.300 12.500,27.500 11,26 C6,24 3,19.500 3,14 C3,7 8.500,1.500 16,1.500 Z" fill="#16a05d"/><path d="M9.800,12 H15 V16.500 Q15,19 12.500,19.300 V16.500 H9.800 Z M17.800,12 H23 V16.500 Q23,19 20.500,19.300 V16.500 H17.800 Z" fill="#fff"/></svg>
<svg class="ico" style="left:2140px;top:149px" width="32" height="32" viewBox="0 0 32 32"><g transform="translate(2 2.2) scale(0.875)"><rect x="0" y="0" width="32" height="32" rx="3" fill="#0077b5"/><rect x="4.500" y="12" width="4.800" height="15.500" fill="#fff"/><circle cx="6.900" cy="7.300" r="2.800" fill="#fff"/><path d="M12.500,12 H17.100 V14.100 C18,12.600 19.800,11.600 22,11.600 C26.500,11.600 27.500,14.500 27.500,18.500 V27.500 H22.700 V19.500 C22.700,17.500 22.600,15.700 20.300,15.700 C18,15.700 17.300,17.400 17.300,19.400 V27.500 H12.500 Z" fill="#fff"/></g></svg>
<svg class="ico" style="left:2196px;top:149px" width="32" height="32" viewBox="0 0 32 32"><g transform="translate(2 2.2) scale(0.875)"><rect width="32" height="32" rx="3" fill="#4862a8"/><path d="M22,32 V19.700 H26.200 L26.800,14.900 H22 V11.800 C22,10.400 22.400,9.500 24.400,9.500 H27 V5.200 C26.500,5.100 25,5 23.300,5 C19.600,5 17.100,7.200 17.100,11.300 V14.900 H13 V19.700 H17.100 V32 Z" fill="#fff"/></g></svg>
<svg class="ico" style="left:2252px;top:149px" width="32" height="32" viewBox="0 0 32 32"><path d="M31.500,6.800 C30.400,7.300 29.200,7.600 27.900,7.800 C29.200,7 30.200,5.800 30.700,4.300 C29.500,5 28.100,5.500 26.700,5.800 C25.500,4.600 23.900,3.800 22.100,3.800 C18.600,3.800 15.800,6.600 15.800,10.100 C15.800,10.600 15.900,11.100 16,11.500 C10.700,11.200 6.100,8.700 3,4.900 C2.400,5.800 2.100,6.900 2.100,8.100 C2.100,10.300 3.200,12.200 4.900,13.300 C3.900,13.300 2.900,13 2.100,12.500 V12.600 C2.100,15.700 4.300,18.200 7.100,18.800 C6.600,18.900 6,19 5.500,19 C5.100,19 4.700,19 4.300,18.900 C5.100,21.400 7.400,23.200 10.200,23.300 C8,25 5.300,26 2.300,26 C1.800,26 1.300,26 0.800,25.900 C3.600,27.700 6.900,28.700 10.500,28.700 C22.100,28.700 28.400,19.100 28.400,10.800 L28.400,10 C29.600,9.100 30.700,8 31.500,6.800 Z" fill="#55acee"/></svg>
<svg class="ico" style="left:2308px;top:149px" width="32" height="32" viewBox="0 0 32 32"><rect width="32" height="32" fill="url(#gyahoo)"/><path d="M6.300,5 H10.800 L16.200,14.200 L21.700,5 H26 L18.100,17.800 V27.800 H14.100 V17.800 Z" fill="#fff"/><path d="M4,1 H12 M20,1 H28 M4,31 H28" stroke="#b9a2e0" stroke-width="1.200" opacity="0.700"/></svg>
<svg class="ico" style="left:2364px;top:149px" width="32" height="32" viewBox="0 0 32 32"><path d="M0.400,25.700 H4.800 L15,12.300 V25.700 H18.800 L28.200,12.800 V25.700 H32 V6.200 H27.800 L18.600,18.800 V6.200 H14.400 Z" fill="url(#gmgreen)"/></svg>
<svg class="ico" style="left:2420px;top:149px" width="32" height="32" viewBox="0 0 32 32"><rect x="2" y="2" width="28" height="28" rx="1.500" fill="#f99d1c"/><path d="M2,17.600 L7.200,13.500 L16.700,22.500 L25,7.200 L30,10.400 V28.500 Q30,30 28.500,30 H3.500 Q2,30 2,28.500 Z" fill="#ee5a24"/><path d="M2,17.600 L7.200,13.500 L16.700,22.500 L25,7.200 L30,10.400" fill="none" stroke="#fff" stroke-width="3.300" stroke-linejoin="miter"/></svg>
<svg class="ico" style="left:2476px;top:149px" width="32" height="32" viewBox="0 0 32 32"><path d="M0.800,29.800 L2.400,30.600 L4.600,26.900 C9,29.400 16,29.400 21.700,26 C27.500,22.500 31.200,15 32,6.300 C29,3.300 23,1.900 17.500,3 C10,5 5.300,12 4,21 C3.700,23 3.600,24.500 3.700,25.300 Z" fill="#78bf43"/><path d="M4.500,26 C10,19.500 19,11 31,6.500" fill="none" stroke="#a3d678" stroke-width="1.100"/><path d="M17.500,3 C23,1.900 29,3.300 32,6.300 C31.800,9 31.200,11.600 30.300,14 C25,9.500 17,7.500 10,9.500 C12,6.300 14.500,4 17.500,3 Z" fill="#90cd5c" opacity="0.750"/></svg>
<div id="tbborder"></div>
<div id="page">
<h1><a class="w" style="left:20px;letter-spacing:-0.32px">All files</a><span class="w" style="left:169.600px;transform:skewX(-7deg)">/</span><a class="w" style="left:195.5px;letter-spacing:0.49px">src/components/ui</a><span class="w" style="left:568.5px;letter-spacing:-0.18px">ColorList.js</span></h1>
<div class="stat"><b style="left:20px;letter-spacing:0.6px">75%</b><span class="quiet" style="left:87px;letter-spacing:0.2px">Statements</span><span class="fraction" style="left:238px">6/8</span></div>
<div class="stat"><b style="left:335px;letter-spacing:0.36px">100%</b><span class="quiet" style="left:416px;letter-spacing:0.28px">Branches</span><span class="fraction" style="left:544px">5/5</span></div>
<div class="stat"><b style="left:639.2px;letter-spacing:0.26px">66.67%</b><span class="quiet" style="left:745px;letter-spacing:0.32px">Functions</span><span class="fraction" style="left:876px">4/6</span></div>
<div class="stat"><b style="left:973.4px;letter-spacing:0.13px">100%</b><span class="quiet" style="left:1054.5px;letter-spacing:0.1px">Lines</span><span class="fraction" style="left:1128px">6/6</span></div>
<div id="statusline"></div>
<div id="code">
<div class="ln">1
2
3
4
5
6
7
8
9
10
11
12
13
14
15
16
17
18
19
20
21
22
23
24</div>
<div class="cov"><span> </span><span> </span><span> </span><span> </span><span class="y">1x</span><span class="y">3x</span><span> </span><span> </span><span> </span><span class="y">6x</span><span> </span><span class="y">1x</span><span class="y">1x</span><span> </span><span> </span><span> </span><span> </span><span class="y">1x</span><span> </span><span> </span><span> </span><span> </span><span> </span><span> </span></div>
<div class="src"><span class="kwd">import</span> <span class="pun">{</span> <span class="typ">PropTypes</span> <span class="pun">}</span> from <span class="str">'react'</span>
<span class="kwd">import</span> <span class="typ">Color</span> from <span class="str">'./Color'</span>
<span class="kwd">import</span> <span class="str">'../../../stylesheets/ColorList.scss'</span>

<span class="kwd">const</span> <span class="typ">ColorList</span> <span class="pun">=</span> <span class="pun">({</span> colors<span class="pun">=[],</span> onRate<span class="pun">=</span><span class="no">f<span class="pun">=</span></span><span class="pun">&gt;</span><span class="no">f<span class="pun">,</span></span> onRemove<span class="pun">=</span><span class="no">f<span class="pun">=</span></span><span class="pun">&gt;</span><span class="no">f </span><span class="pun">})</span> <span class="pun">=&gt;</span>
    <span class="pun">&lt;</span>div className<span class="pun">=</span><span class="str">"color-list"</span><span class="pun">&gt;</span>
        <span class="pun">{(</span>colors<span class="pun">.</span>length <span class="pun">===</span> <span class="lit">0</span><span class="pun">)</span> <span class="pun">?</span>
            <span class="pun">&lt;</span>p<span class="pun">&gt;</span><span class="typ">No</span> <span class="typ">Colors</span> <span class="typ">Listed</span><span class="pun">.</span> <span class="pun">(</span><span class="typ">Add</span> a <span class="typ">Color</span><span class="pun">)&lt;/</span>p<span class="pun">&gt;</span> <span class="pun">:</span>
            colors<span class="pun">.</span>map<span class="pun">(</span>color <span class="pun">=&gt;</span>
                <span class="pun">&lt;</span><span class="typ">Color</span> key<span class="pun">={</span>color<span class="pun">.</span>id<span class="pun">}</span>
                    <span class="pun">{...</span>color<span class="pun">}</span>
                       onRate<span class="pun">={(</span>rating<span class="pun">)</span> <span class="pun">=&gt;</span> onRate<span class="pun">(</span>color<span class="pun">.</span>id<span class="pun">,</span> rating<span class="pun">)}</span>
                       onRemove<span class="pun">={()</span> <span class="pun">=&gt;</span> onRemove<span class="pun">(</span>color<span class="pun">.</span>id<span class="pun">)}</span> <span class="pun">/&gt;</span>
            <span class="pun">)</span>
        <span class="pun">}</span>
    <span class="pun">&lt;/</span>div<span class="pun">&gt;</span>

<span class="typ">ColorList</span><span class="pun">.</span>propTypes <span class="pun">=</span> <span class="pun">{</span>
    colors<span class="pun">:</span> <span class="typ">PropTypes</span><span class="pun">.</span>array<span class="pun">,</span>
    onRate<span class="pun">:</span> <span class="typ">PropTypes</span><span class="pun">.</span>func<span class="pun">,</span>
    onRemove<span class="pun">:</span> <span class="typ">PropTypes</span><span class="pun">.</span>func
<span class="pun">}</span>

<span class="kwd">export</span> <span class="kwd">default</span> <span class="typ">ColorList</span></div>
</div>
<div id="footer"><span style="left:989.5px">Code coverage generated by</span><a style="left:1308.5px;letter-spacing:0.33px">istanbul</a><span style="left:1399.8px;letter-spacing:-0.2px">at Tue Mar 14 2017 13:21:48 GMT-0700 (PDT)</span></div>
</div>
</body>
</html>
